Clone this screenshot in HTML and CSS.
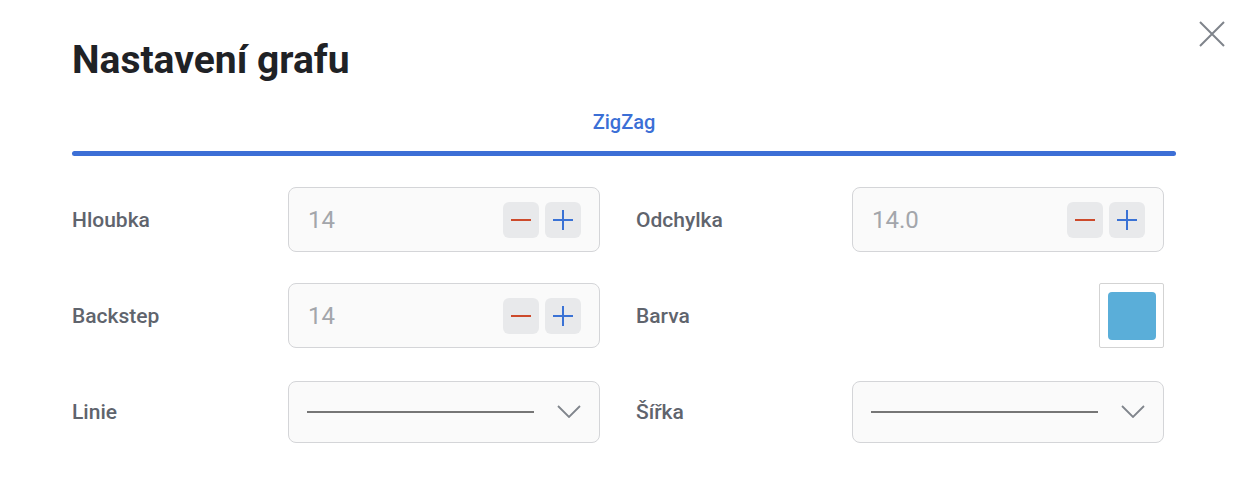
FILE: index.html
```html
<!DOCTYPE html>
<html lang="cs">
<head>
<meta charset="utf-8">
<title>Nastavení grafu</title>
<link rel="stylesheet" href="styles.css">
</head>
<body>
<div class="dialog">
  <button class="close" aria-label="Zavřít">
    <svg width="26" height="26" viewBox="0 0 26 26"><path d="M1 1 L25 25 M25 1 L1 25" stroke="#7f848b" stroke-width="2" fill="none"/></svg>
  </button>
  <h1 class="title">Nastavení grafu</h1>
  <div class="tabs">
    <div class="tab">ZigZag</div>
    <div class="tab-bar"></div>
  </div>
  <div class="grid">
    <div class="field">
      <div class="label">Hloubka</div>
      <div class="input">
        <span class="value">14</span>
        <span class="btns">
          <span class="btn"><span class="minus"></span></span>
          <span class="btn"><span class="plus"></span></span>
        </span>
      </div>
    </div>
    <div class="field">
      <div class="label">Odchylka</div>
      <div class="input">
        <span class="value">14.0</span>
        <span class="btns">
          <span class="btn"><span class="minus"></span></span>
          <span class="btn"><span class="plus"></span></span>
        </span>
      </div>
    </div>
    <div class="field">
      <div class="label">Backstep</div>
      <div class="input">
        <span class="value">14</span>
        <span class="btns">
          <span class="btn"><span class="minus"></span></span>
          <span class="btn"><span class="plus"></span></span>
        </span>
      </div>
    </div>
    <div class="field">
      <div class="label">Barva</div>
      <div class="swatch-wrap">
        <div class="swatch"><span class="swatch-color"></span></div>
      </div>
    </div>
    <div class="field">
      <div class="label">Linie</div>
      <div class="select">
        <span class="line"></span>
        <svg class="chev" width="24" height="13" viewBox="0 0 24 13"><path d="M1 1 L12 12 L23 1" stroke="#80858c" stroke-width="1.8" fill="none"/></svg>
      </div>
    </div>
    <div class="field">
      <div class="label">Šířka</div>
      <div class="select">
        <span class="line"></span>
        <svg class="chev" width="24" height="13" viewBox="0 0 24 13"><path d="M1 1 L12 12 L23 1" stroke="#80858c" stroke-width="1.8" fill="none"/></svg>
      </div>
    </div>
  </div>
</div>
</body>
</html>
```

FILE: styles.css
```css
* { box-sizing: border-box; }
html, body { margin: 0; padding: 0; background: #ffffff; }
body { font-family: Roboto, "Liberation Sans", Arial, sans-serif; }

.dialog {
  position: relative;
  width: 1248px;
  height: 482px;
  padding: 34px 72px 0 72px;
}

.close {
  position: absolute;
  top: 21px;
  right: 23px;
  width: 26px;
  height: 26px;
  padding: 0;
  border: 0;
  background: transparent;
  display: flex;
}

.title {
  margin: 0;
  font-size: 39px;
  line-height: 52px;
  font-weight: 700;
  color: #1f2226;
  letter-spacing: 0;
}

.tabs {
  margin-top: 24px;
  display: flex;
  flex-direction: column;
  align-items: center;
}
.tab {
  font-size: 20px;
  font-weight: 500;
  line-height: 24px;
  color: #3b6fd6;
}
.tab-bar {
  margin-top: 17px;
  width: 100%;
  height: 5px;
  border-radius: 3px;
  background: #3c6fd6;
}

.grid {
  margin-top: 31px;
  display: grid;
  grid-template-columns: 528px 528px;
  column-gap: 36px;
  row-gap: 31px;
  grid-auto-rows: 65px;
}

.field {
  display: flex;
  align-items: center;
}
.label {
  width: 216px;
  flex: none;
  font-size: 21px;
  font-weight: 500;
  color: #5f646d;
}

.input {
  width: 312px;
  height: 65px;
  border: 1px solid #d4d5d8;
  border-radius: 8px;
  background: #fafafa;
  display: flex;
  align-items: center;
  justify-content: space-between;
  padding: 0 18px 0 19px;
}
.value {
  font-size: 24px;
  color: #a3a6ab;
}
.btns {
  display: flex;
  gap: 6px;
}
.btn {
  width: 36px;
  height: 36px;
  border-radius: 6px;
  background: #e8e9eb;
  display: flex;
  align-items: center;
  justify-content: center;
  position: relative;
}
.minus {
  width: 20px;
  height: 2px;
  background: #cd4a2b;
}
.plus {
  width: 20px;
  height: 20px;
  position: relative;
}
.plus::before, .plus::after {
  content: "";
  position: absolute;
  background: #3a72d5;
}
.plus::before { left: 0; top: 9px; width: 20px; height: 2px; }
.plus::after { left: 9px; top: 0; width: 2px; height: 20px; }

.swatch-wrap {
  width: 312px;
  display: flex;
  justify-content: flex-end;
}
.swatch {
  width: 65px;
  height: 65px;
  border: 1px solid #d3d3d3;
  border-radius: 2px;
  display: flex;
  align-items: center;
  justify-content: center;
  background: #ffffff;
}
.swatch-color {
  width: 48px;
  height: 48px;
  border-radius: 4px;
  background: #5aaed9;
}

.select {
  width: 312px;
  height: 62px;
  border: 1px solid #d4d5d8;
  border-radius: 8px;
  background: #fafafa;
  display: flex;
  align-items: center;
  padding: 0 18px 0 18px;
}
.line {
  width: 227px;
  height: 2px;
  background: #767676;
}
.chev {
  margin-left: auto;
}
```
